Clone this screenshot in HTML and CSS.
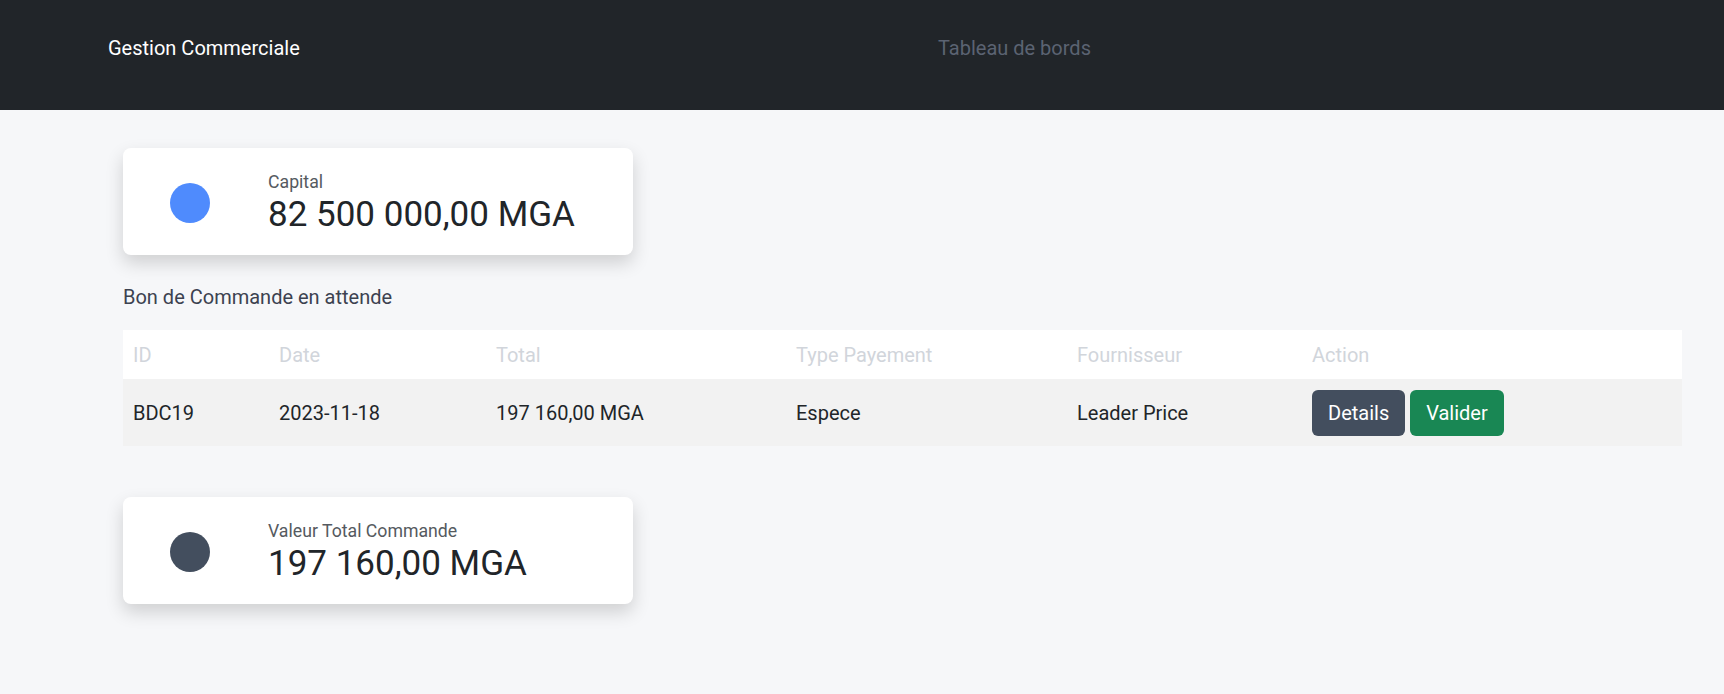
FILE: index.html
```html
<!DOCTYPE html>
<html lang="fr">
<head>
<meta charset="utf-8">
<title>Gestion Commerciale</title>
<link rel="stylesheet" href="styles.css">
</head>
<body>
<header class="navbar">
  <span class="brand">Gestion Commerciale</span>
  <nav class="nav"><a class="nav-link" href="#">Tableau de bords</a></nav>
</header>
<main class="content">
  <section class="stat-card">
    <span class="dot dot-blue"></span>
    <div class="stat-text">
      <div class="stat-label">Capital</div>
      <div class="stat-value">82 500 000,00 MGA</div>
    </div>
  </section>

  <h2 class="section-title">Bon de Commande en attende</h2>
  <table class="orders">
    <thead>
      <tr>
        <th class="c-id">ID</th>
        <th class="c-date">Date</th>
        <th class="c-total">Total</th>
        <th class="c-type">Type Payement</th>
        <th class="c-four">Fournisseur</th>
        <th>Action</th>
      </tr>
    </thead>
    <tbody>
      <tr>
        <td>BDC19</td>
        <td>2023-11-18</td>
        <td>197 160,00 MGA</td>
        <td>Espece</td>
        <td>Leader Price</td>
        <td><div class="actions"><button class="btn btn-dark">Details</button><button class="btn btn-green">Valider</button></div></td>
      </tr>
    </tbody>
  </table>

  <section class="stat-card stat-card-2">
    <span class="dot dot-slate"></span>
    <div class="stat-text">
      <div class="stat-label">Valeur Total Commande</div>
      <div class="stat-value">197 160,00 MGA</div>
    </div>
  </section>
</main>
</body>
</html>
```

FILE: styles.css
```css
* { box-sizing: border-box; }
html, body { margin: 0; padding: 0; }
body {
  font-family: Roboto, "Liberation Sans", Arial, sans-serif;
  background: #f6f7f9;
  color: #212529;
}
.navbar {
  height: 110px;
  background: #212529;
  display: flex;
  align-items: center;
  padding: 0 0 15px 108px;
}
.brand {
  color: #ffffff;
  font-size: 20px;
  width: 830px;
}
.nav-link {
  color: #5b6372;
  font-size: 20px;
  text-decoration: none;
}
.content {
  padding: 38px 42px 40px 123px;
}
.stat-card {
  width: 510px;
  height: 107px;
  background: #fff;
  border-radius: 8px;
  box-shadow: 0 8px 18px rgba(0, 0, 0, 0.16);
  display: flex;
  align-items: center;
  padding-left: 47px;
}
.stat-card-2 { margin-top: 51px; }
.dot {
  width: 40px;
  height: 40px;
  border-radius: 50%;
  flex: none;
  margin-right: 58px;
  margin-top: 2px;
}
.dot-blue { background: #4f8bfd; }
.dot-slate { background: #434e5e; }
.stat-text { display: flex; flex-direction: column; padding-top: 5px; }
.stat-label {
  font-size: 17.7px;
  color: #555a60;
  line-height: 22px;
}
.stat-value {
  font-size: 35px;
  line-height: 44px;
  color: #212529;
}
.section-title {
  font-weight: 400;
  font-size: 20px;
  color: #3c4250;
  margin: 30px 0 21px;
  line-height: 24px;
}
.orders {
  width: 100%;
  border-collapse: collapse;
  font-size: 20px;
}
.orders th {
  font-weight: 400;
  color: #d1d5db;
  text-align: left;
  background: #fff;
  height: 49px;
  padding: 0 10px;
}
.orders td {
  background: #f2f2f2;
  height: 67px;
  padding: 0 10px;
}
.c-id { width: 146px; }
.c-date { width: 217px; }
.c-total { width: 300px; }
.c-type { width: 281px; }
.c-four { width: 235px; }
.actions { display: flex; gap: 5px; }
.btn {
  font-family: inherit;
  font-size: 20px;
  color: #fff;
  border: none;
  border-radius: 6px;
  height: 46px;
  padding: 0 16px;
}
.btn-dark { background: #434e5e; }
.btn-green { background: #198754; }
```
